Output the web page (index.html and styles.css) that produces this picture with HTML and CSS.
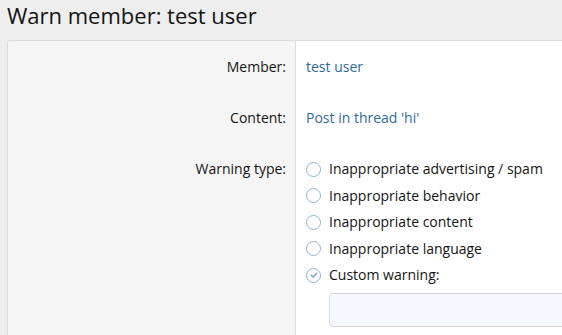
FILE: index.html
```html
<!DOCTYPE html>
<html lang="en">
<head>
  <meta charset="UTF-8"/>
  <title>Warn member: test user</title>
  <link rel="stylesheet" href="styles.css">
</head>
<body>

<h1 class="page-title">Warn member: test user</h1>

<div class="block">
  <dl class="row">
    <dt>Member:</dt>
    <dd><a href="#">test user</a></dd>
  </dl>
  <dl class="row">
    <dt>Content:</dt>
    <dd><a href="#">Post in thread 'hi'</a></dd>
  </dl>
  <dl class="row">
    <dt>Warning type:</dt>
    <dd>
      <ul class="choices">
        <li><span class="radio"></span>Inappropriate advertising / spam</li>
        <li><span class="radio"></span>Inappropriate behavior</li>
        <li><span class="radio"></span>Inappropriate content</li>
        <li><span class="radio"></span>Inappropriate language</li>
        <li>
          <span class="radio checked">
            <svg viewBox="0 0 12 12" width="12" height="12"><path d="M3.2 6.2 L5.2 8.1 L8.8 4.3" fill="none" stroke="#7aa0cf" stroke-width="1.4" stroke-linecap="round" stroke-linejoin="round"/></svg>
          </span>Custom warning:
        </li>
      </ul>
      <input class="text-input" type="text"/>
    </dd>
  </dl>
</div>

</body>
</html>
```

FILE: styles.css
```css
body {
  margin: 0;
  background: #eeeeee;
  font-family: "Open Sans", "Segoe UI", sans-serif;
  font-size: 14px;
  color: #141414;
  overflow: hidden;
}
.page-title {
  margin: 0;
  padding: 0 7px;
  height: 40px;
  font-size: 22px;
  font-weight: 400;
  line-height: 31px;
}
.block {
  margin-left: 7px;
  width: 620px;
  background: #fff;
  border: 1px solid #dcdcdc;
  border-radius: 3px;
  overflow: hidden;
}
.row {
  display: grid;
  grid-template-columns: 288px 1fr;
  margin: 0;
}
.row dt {
  background: #f5f5f5;
  border-right: 1px solid #dcdcdc;
  text-align: right;
  padding: 16px 9px 15px 10px;
  line-height: 20px;
}
.row dd {
  margin: 0;
  padding: 16px 10px 15px;
  line-height: 20px;
}
a {
  color: #2f6a9f;
  text-decoration: none;
}
.choices {
  list-style: none;
  margin: 0;
  padding: 0;
}
.choices li {
  display: flex;
  align-items: center;
  gap: 8px;
  height: 20px;
  margin-bottom: 6.5px;
}
.radio {
  width: 15px;
  height: 15px;
  box-sizing: border-box;
  border: 1.6px solid #8db0d9;
  border-radius: 50%;
  display: flex;
  align-items: center;
  justify-content: center;
}
.radio svg {
  display: block;
}
.text-input {
  display: block;
  margin: 8px 0 0 23px;
  width: 320px;
  height: 34px;
  box-sizing: border-box;
  background: #f5f8fc;
  border: 1px solid #d5d5d5;
  border-radius: 4px;
}
```
